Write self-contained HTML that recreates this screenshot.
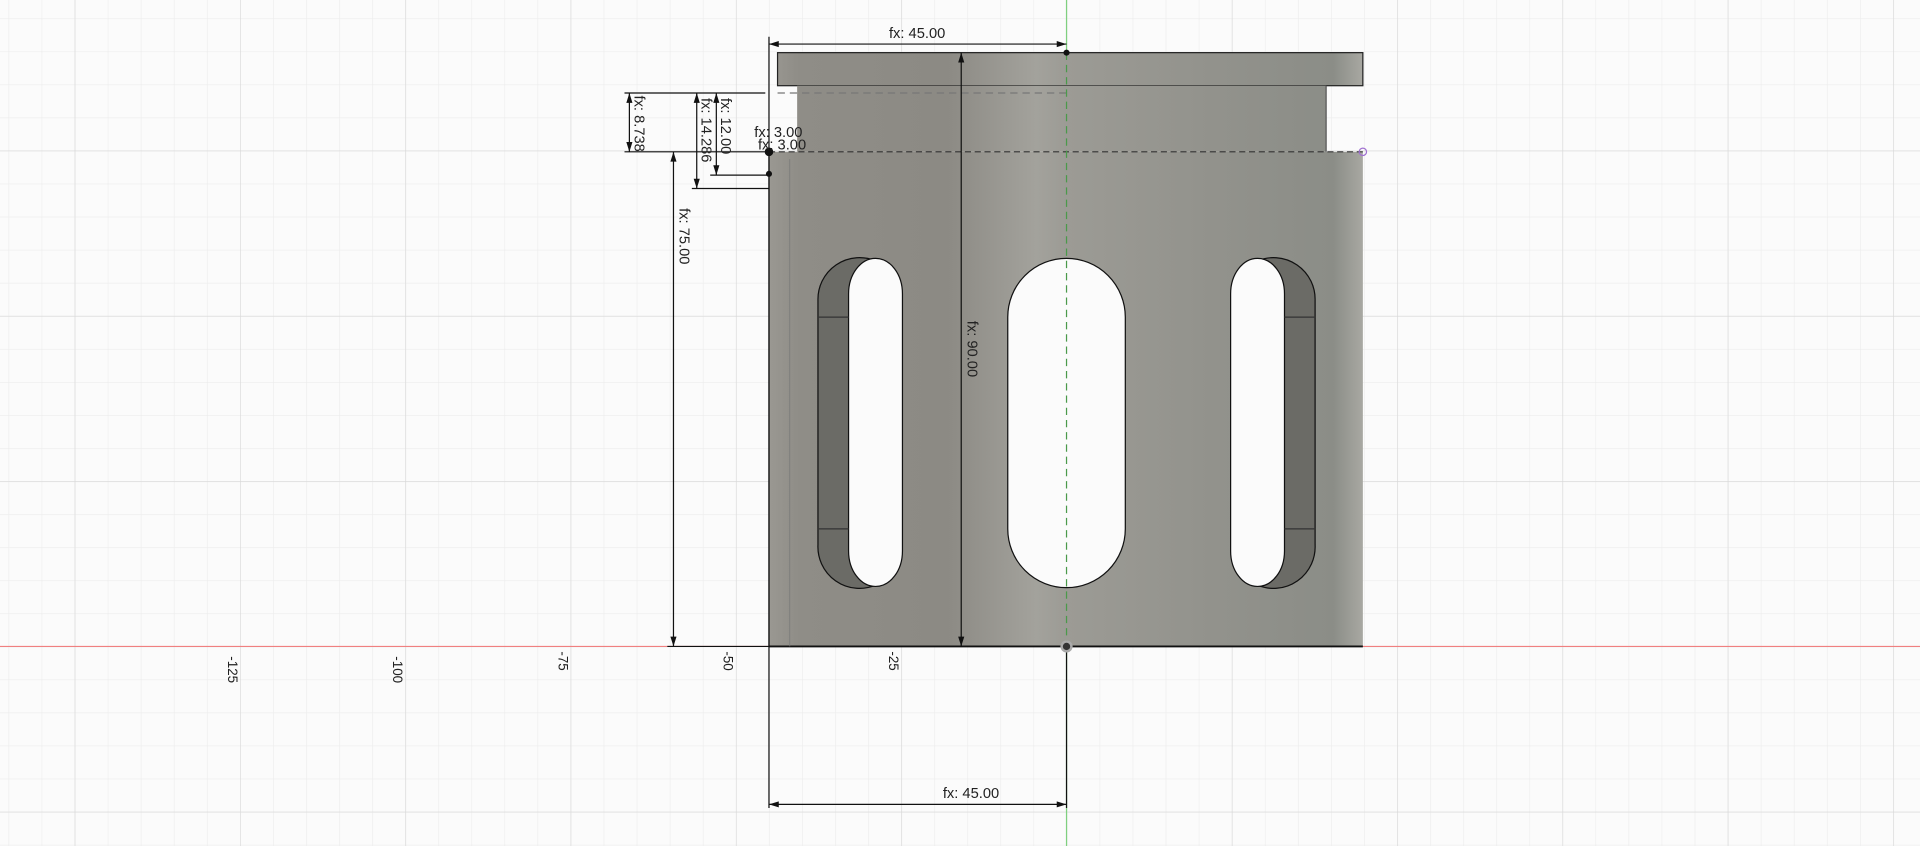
<!DOCTYPE html><html><head><style>html,body{margin:0;padding:0;background:#fbfbfb;overflow:hidden}svg{display:block}text{font-family:"Liberation Sans",sans-serif;fill:#222}</style></head><body>
<svg width="1920" height="846" viewBox="0 0 1568 691" preserveAspectRatio="none" xmlns="http://www.w3.org/2000/svg">
<defs>
<pattern id="mg" x="871" y="528" width="27" height="27" patternUnits="userSpaceOnUse"><path d="M0 0H27M0 0V27" stroke="#ececec" stroke-width="1" fill="none"/></pattern>
<pattern id="Mg" x="871" y="528" width="135" height="135" patternUnits="userSpaceOnUse"><path d="M0 0H135M0 0V135" stroke="#d8d8d8" stroke-width="1" fill="none"/></pattern>
<linearGradient id="g" x1="628" x2="1113" y1="0" y2="0" gradientUnits="userSpaceOnUse">
<stop offset="0" stop-color="#9a9892"/><stop offset="0.05" stop-color="#8f8d87"/><stop offset="0.3" stop-color="#8c8a84"/><stop offset="0.45" stop-color="#a3a29c"/><stop offset="0.5" stop-color="#9c9b95"/><stop offset="0.75" stop-color="#92928c"/><stop offset="0.95" stop-color="#8b8d87"/><stop offset="1" stop-color="#a8a8a2"/></linearGradient>
</defs>
<rect width="1568" height="691" fill="#fbfbfb"/>
<rect width="1568" height="691" fill="url(#mg)"/>
<rect width="1568" height="691" fill="url(#Mg)"/>
<line x1="0" y1="528" x2="1568" y2="528" stroke="#f08080" stroke-width="1"/>
<line x1="871" y1="0" x2="871" y2="691" stroke="#7fd07f" stroke-width="1"/>
<g font-size="11" fill="#444">
<text transform="translate(186,536) rotate(90)">-125</text>
<text transform="translate(321,536) rotate(90)">-100</text>
<text transform="translate(456,532) rotate(90)">-75</text>
<text transform="translate(591,532) rotate(90)">-50</text>
<text transform="translate(726,532) rotate(90)">-25</text>
<text transform="translate(875,244) rotate(90)">50</text>
<text transform="translate(875,378) rotate(90)">25</text>
</g>
<!-- body -->
<rect x="635" y="43" width="478" height="27" fill="url(#g)" stroke="#222" stroke-width="1"/>
<rect x="651" y="70" width="432" height="54" fill="url(#g)"/>
<line x1="1083" y1="70" x2="1083" y2="124" stroke="#555"/>
<rect x="628" y="124" width="485" height="404" fill="url(#g)"/>
<line x1="628" y1="528" x2="1113" y2="528" stroke="#111" stroke-width="1.5"/>
<line x1="628" y1="124" x2="628" y2="528" stroke="#222"/>
<line x1="645" y1="130" x2="645" y2="528" stroke="#777" stroke-width="0.6"/>
<line x1="628" y1="124" x2="1113" y2="124" stroke="#333" stroke-dasharray="5,3"/>
<line x1="635" y1="76" x2="871" y2="76" stroke="#777" stroke-dasharray="6,4"/>
<!-- slots -->
<path d="M823 259 A48 48 0 0 1 919 259 V432 A48 48 0 0 1 823 432 Z" fill="#fbfbfb" stroke="#111"/>
<path d="M668 245 A34 34 0 0 1 715 213 V478 A34 34 0 0 1 668 445 Z" fill="#6b6b66" stroke="#111"/>
<path d="M693 240 A22 29 0 0 1 737 240 V450 A22 29 0 0 1 693 450 Z" fill="#fbfbfb" stroke="#111"/>
<path d="M1074 245 A34 34 0 0 0 1027 213 V478 A34 34 0 0 0 1074 445 Z" fill="#6b6b66" stroke="#111"/>
<path d="M1005 240 A22 29 0 0 1 1049 240 V450 A22 29 0 0 1 1005 450 Z" fill="#fbfbfb" stroke="#111"/>
<line x1="668" y1="259" x2="693" y2="259" stroke="#333"/><line x1="668" y1="432" x2="693" y2="432" stroke="#333"/>
<line x1="1049" y1="259" x2="1074" y2="259" stroke="#333"/><line x1="1049" y1="432" x2="1074" y2="432" stroke="#333"/>
<line x1="871" y1="43" x2="871" y2="528" stroke="#4a9a4a" stroke-dasharray="6,4"/>
<!-- dimensions -->
<g stroke="#111" stroke-width="1" fill="none">
<line x1="628" y1="30" x2="628" y2="660"/>
<line x1="628" y1="36" x2="871" y2="36"/>
<line x1="628" y1="657" x2="871" y2="657"/>
<line x1="871" y1="528" x2="871" y2="660"/>
<line x1="785" y1="43" x2="785" y2="528"/>
<line x1="510" y1="76" x2="625" y2="76"/>
<line x1="510" y1="124" x2="628" y2="124"/>
<line x1="514" y1="76" x2="514" y2="124"/>
<line x1="569" y1="76" x2="569" y2="154"/>
<line x1="565" y1="154" x2="628" y2="154"/>
<line x1="585" y1="76" x2="585" y2="143"/>
<line x1="580" y1="143" x2="628" y2="143"/>
<line x1="550" y1="124" x2="550" y2="528"/>
<line x1="545" y1="528" x2="628" y2="528"/>
</g>
<g fill="#111">
<path d="M628 36l8-2.5v5z M871 36l-8-2.5v5z M628 657l8-2.5v5z M871 657l-8-2.5v5z M785 43l-2.5 8h5z M785 528l-2.5-8h5z M514 76l-2.5 8h5z M514 124l-2.5-8h5z M569 76l-2.5 8h5z M569 154l-2.5-8h5z M585 76l-2.5 8h5z M585 143l-2.5-8h5z M550 124l-2.5 8h5z M550 528l-2.5-8h5z"/>
<circle cx="628" cy="124" r="3.5"/><circle cx="628" cy="142" r="2.5"/><circle cx="871" cy="43" r="2.5"/><circle cx="871" cy="528" r="4" fill="#333" stroke="#aaa" stroke-width="2"/>
</g>
<circle cx="1113" cy="124" r="3" fill="none" stroke="#a070d0"/>
<g font-size="12">
<text x="726" y="31">fx: 45.00</text>
<text x="770" y="652">fx: 45.00</text>
<text transform="translate(790,262) rotate(90)">fx: 90.00</text>
<text transform="translate(555,170) rotate(90)">fx: 75.00</text>
<text transform="translate(518,78) rotate(90)">fx: 8.738</text>
<text transform="translate(573,80) rotate(90)">fx: 14.286</text>
<text transform="translate(589,80) rotate(90)">fx: 12.00</text>
<text x="616" y="112">fx: 3.00</text>
<text x="619" y="122">fx: 3.00</text>
</g>
</svg>
</body></html>
